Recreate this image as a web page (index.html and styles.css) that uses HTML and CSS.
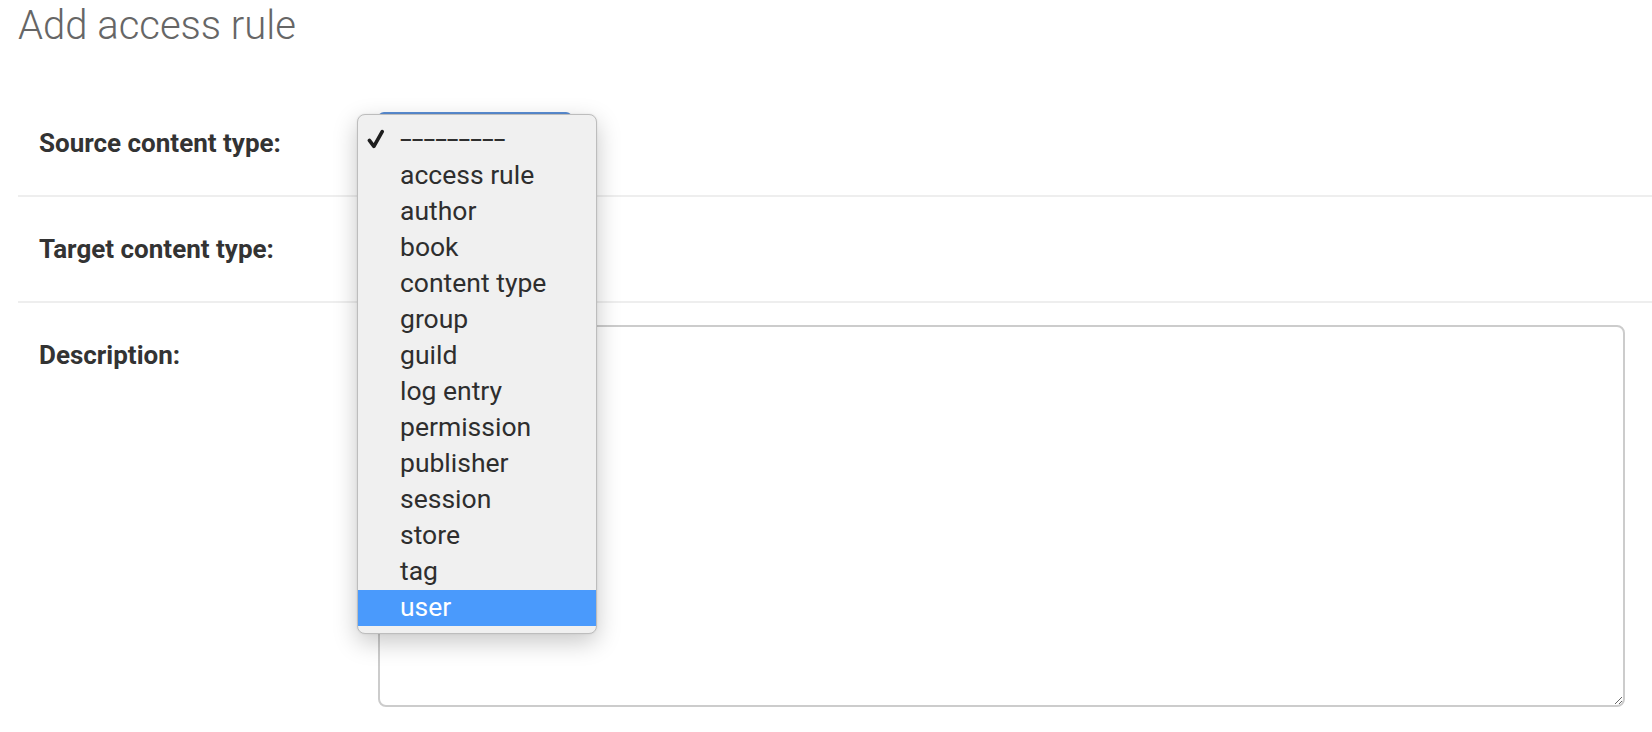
FILE: index.html
```html
<!DOCTYPE html>
<html>
<head>
<meta charset="utf-8">
<title>Add access rule</title>
<link rel="stylesheet" href="styles.css">
</head>
<body>
<div class="content">
  <h1 class="title">Add access rule</h1>
  <form class="form">
    <div class="row">
      <label class="label">Source content type:</label>
      <div class="field">
        <div class="select select-focused">
          <div class="popup">
            <div class="item item-checked">
              <svg class="check" width="18" height="20" viewBox="0 0 18 20"><path d="M2.4 11.4 L6.9 17.4 L15.2 2.6" fill="none" stroke="#1e1e1e" stroke-width="3.6" stroke-linecap="round" stroke-linejoin="round"/></svg>
              <span class="dashes">---------</span>
            </div>
            <div class="item">access rule</div>
            <div class="item">author</div>
            <div class="item">book</div>
            <div class="item">content type</div>
            <div class="item">group</div>
            <div class="item">guild</div>
            <div class="item">log entry</div>
            <div class="item">permission</div>
            <div class="item">publisher</div>
            <div class="item">session</div>
            <div class="item">store</div>
            <div class="item">tag</div>
            <div class="item item-active">user</div>
          </div>
        </div>
      </div>
    </div>
    <div class="row">
      <label class="label">Target content type:</label>
      <div class="field">
        <div class="select"></div>
      </div>
    </div>
    <div class="row row-last">
      <label class="label">Description:</label>
      <div class="field">
        <textarea class="textarea"></textarea>
      </div>
    </div>
  </form>
</div>
</body>
</html>
```
FILE: styles.css
```css
html, body {
  margin: 0;
  padding: 0;
  background: #fff;
  overflow: hidden;
}

body {
  font-family: Roboto, "Liberation Sans", sans-serif;
  color: #333;
}

.content {
  padding-left: 18px;
}

.title {
  margin: 1px 0 40px 0;
  font-family: Roboto, sans-serif;
  font-weight: 300;
  font-size: 40px;
  line-height: 50px;
  color: #666;
}

.form {
  margin: 0;
}

.row {
  display: flex;
  align-items: flex-start;
  padding: 22px 27px 22px 21px;
  border-bottom: 2px solid #eee;
}

.row-last {
  border-bottom: none;
}

.label {
  flex: none;
  width: 339px;
  padding-top: 15px;
  font-weight: 700;
  font-size: 26px;
  line-height: 30px;
  color: #333;
}

.field {
  flex: 1;
  display: flex;
  min-height: 60px;
}

.select {
  position: relative;
  width: 194px;
  height: 60px;
  box-sizing: border-box;
  border: 2px solid #ccc;
  border-radius: 6px;
  background: #fff;
}

.select-focused {
  margin-top: -1px;
  border-color: #5b8fd6;
  z-index: 5;
}

.popup {
  position: absolute;
  left: -23px;
  top: 0px;
  width: 240px;
  box-sizing: border-box;
  padding: 7px 0;
  background: #f0f0f0;
  border: 1px solid #bdbdbd;
  border-radius: 8px;
  box-shadow: 0 8px 24px rgba(0, 0, 0, 0.22), 0 0 2px rgba(0, 0, 0, 0.1);
  z-index: 10;
}

.item {
  position: relative;
  height: 36px;
  box-sizing: border-box;
  padding: 1px 0 3px 42px;
  font-family: Roboto, sans-serif;
  font-size: 26.5px;
  line-height: 32px;
  color: #2e2e2e;
  white-space: nowrap;
}

.item-active {
  background: #4a9afc;
  color: #fff;
}

.check {
  position: absolute;
  left: 9px;
  top: 7px;
}

.dashes {
  display: inline-block;
  transform: scaleX(1.6);
  transform-origin: left center;
}

.textarea {
  flex: 1;
  height: 382px;
  box-sizing: border-box;
  margin: 0;
  border: 2px solid #ccc;
  border-radius: 8px;
  padding: 10px;
  font-family: Roboto, sans-serif;
  font-size: 26px;
  background: #fff;
  resize: both;
}
```
